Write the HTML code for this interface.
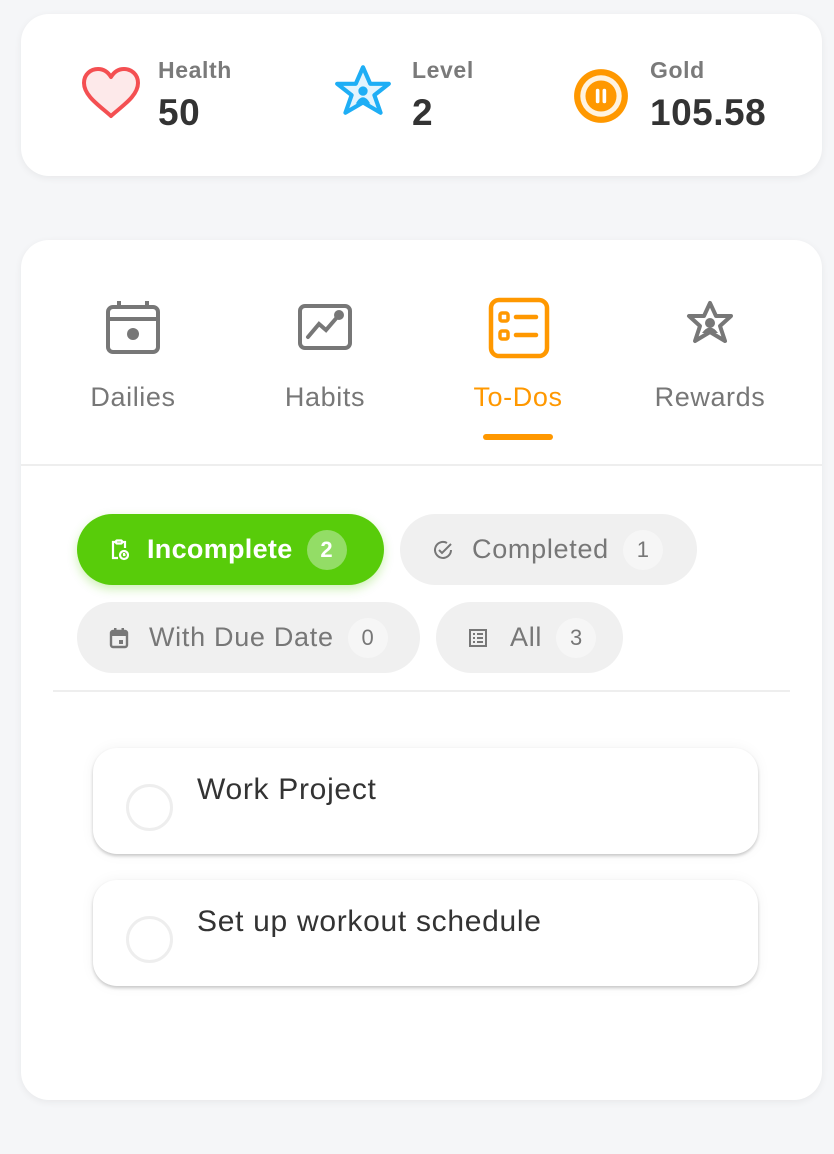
<!DOCTYPE html>
<html><head><style>
*{margin:0;padding:0;box-sizing:border-box}
body{width:834px;height:1154px;background:#f5f6f8;font-family:"Liberation Sans",sans-serif;position:relative;overflow:hidden}
.card{position:absolute;left:21px;width:801px;background:#fff;border-radius:28px;box-shadow:0 2px 8px rgba(0,0,0,.06)}
.a{position:absolute}
.lbl{font-size:23px;font-weight:bold;color:#7a7a7a;letter-spacing:.6px}
.val{font-size:37px;font-weight:bold;color:#333;letter-spacing:.5px}
.tab{position:absolute;width:190px;text-align:center;font-size:27px;color:#777;top:382px;letter-spacing:.6px}
.chip{position:absolute;height:71px;border-radius:36px;background:#f0f0f0;color:#777;font-size:27px;display:flex;align-items:center;padding-left:32px;letter-spacing:.7px}
.badge{display:inline-flex;width:40px;height:40px;border-radius:20px;background:#f6f6f6;align-items:center;justify-content:center;font-size:22px;margin-left:14px;letter-spacing:0}
.task{position:absolute;left:93px;width:665px;height:106px;background:#fff;border-radius:24px;box-shadow:0 2px 3px rgba(0,0,0,.2),0 0 14px rgba(0,0,0,.05)}
.circ{position:absolute;left:33px;top:36px;width:47px;height:47px;border-radius:50%;border:3px solid #eee}
.tt{position:absolute;left:104px;top:25px;font-size:30px;color:#333;letter-spacing:.7px}
</style></head><body>
<div class="card" style="top:14px;height:162px"></div>
<svg class="a" style="left:80px;top:66px" width="62" height="54" viewBox="0 0 62 54"><path d="M31 50 C20 40 4 30 4 17 C4 8 11 3 18 3 C24 3 28 6 31 11 C34 6 38 3 44 3 C51 3 58 8 58 17 C58 30 42 40 31 50Z" fill="#fde9ea" stroke="#f44f52" stroke-width="4" stroke-linejoin="round"/></svg>
<div class="a lbl" style="left:158px;top:57px">Health</div>
<div class="a val" style="left:158px;top:92px">50</div>
<svg class="a" style="left:333px;top:64px" width="60" height="52" viewBox="0 0 58 50"><path d="M29 3 L36 19 L54 19 L40 30 L46 47 L29 37 L12 47 L18 30 L4 19 L22 19Z" fill="#e3f4fd" stroke="#1eaef5" stroke-width="4" stroke-linejoin="round"/><circle cx="29" cy="26" r="4.5" fill="#1eaef5"/><path d="M22 38 Q29 26 36 38Z" fill="#1eaef5"/></svg>
<div class="a lbl" style="left:412px;top:57px">Level</div>
<div class="a val" style="left:412px;top:92px">2</div>
<svg class="a" style="left:572px;top:67px" width="58" height="58" viewBox="0 0 56 56"><circle cx="28" cy="28" r="26" fill="#ff9800"/><circle cx="28" cy="28" r="20" fill="#fff3e0"/><circle cx="28" cy="28" r="15" fill="#ff9800"/><rect x="23" y="21" width="3.5" height="14" rx="1.7" fill="#fff"/><rect x="29.5" y="21" width="3.5" height="14" rx="1.7" fill="#fff"/></svg>
<div class="a lbl" style="left:650px;top:57px">Gold</div>
<div class="a val" style="left:650px;top:92px">105.58</div>

<div class="card" style="top:240px;height:860px"></div>
<svg class="a" style="left:105px;top:299px" width="56" height="56" viewBox="0 0 56 56" fill="none" stroke="#777" stroke-width="4"><rect x="3" y="8" width="50" height="45" rx="5"/><line x1="3" y1="20" x2="53" y2="20"/><line x1="14" y1="2" x2="14" y2="10"/><line x1="42" y1="2" x2="42" y2="10"/><circle cx="28" cy="35" r="6" fill="#777" stroke="none"/></svg>
<svg class="a" style="left:297px;top:303px" width="56" height="48" viewBox="0 0 56 48" fill="none" stroke="#777" stroke-width="4"><rect x="3" y="3" width="50" height="42" rx="5"/><path d="M11 34 L22 21 L29 27 L42 12" stroke-linecap="round"/><circle cx="42" cy="12" r="3" fill="#777"/></svg>
<svg class="a" style="left:488px;top:297px" width="62" height="62" viewBox="0 0 62 62" fill="none" stroke="#ff9800" stroke-width="4.5"><rect x="3" y="3" width="56" height="56" rx="8"/><rect x="12" y="16" width="8" height="8" rx="2" stroke-width="3.5"/><rect x="12" y="34" width="8" height="8" rx="2" stroke-width="3.5"/><line x1="28" y1="20" x2="48" y2="20" stroke-linecap="round"/><line x1="28" y1="38" x2="48" y2="38" stroke-linecap="round"/></svg>
<svg class="a" style="left:685px;top:300px" width="50" height="44" viewBox="0 0 50 44"><path d="M25 3 L31 16 L46 16 L35 26 L40 41 L25 32 L10 41 L15 26 L4 16 L19 16Z" fill="none" stroke="#777" stroke-width="4" stroke-linejoin="round"/><circle cx="25" cy="23" r="5" fill="#777"/><path d="M17 33 Q25 22 33 33Z" fill="#777"/></svg>
<div class="tab" style="left:38px">Dailies</div>
<div class="tab" style="left:230px">Habits</div>
<div class="tab" style="left:423px;color:#ff9800">To-Dos</div>
<div class="tab" style="left:615px">Rewards</div>
<div class="a" style="left:483px;top:434px;width:70px;height:6px;border-radius:3px;background:#ff9800"></div>
<div class="a" style="left:21px;top:464px;width:801px;height:2px;background:#eee"></div>

<div class="chip" style="left:77px;top:514px;width:307px;background:#58cc0a;color:#fff;font-weight:bold;box-shadow:0 4px 10px rgba(88,204,10,.3);letter-spacing:.3px">
<svg width="20" height="22" viewBox="0 0 20 22" fill="none" stroke="#fff" stroke-width="2.2" style="margin-right:18px"><path d="M7 3H4v16h5"/><path d="M13 3h3v6"/><rect x="7" y="1.5" width="6" height="3" rx="1"/><circle cx="15" cy="16" r="4"/><path d="M15 14v2h1.5"/></svg>Incomplete<span class="badge" style="background:#93dd66;color:#fff">2</span></div>
<div class="chip" style="left:400px;top:514px;width:297px">
<svg width="22" height="22" viewBox="0 0 22 22" fill="none" stroke="#777" stroke-width="2" style="margin-right:18px"><path d="M19 11a8 8 0 1 1-4-7"/><path d="M7 11l3 3 9-9"/></svg>Completed<span class="badge">1</span></div>
<div class="chip" style="left:77px;top:602px;width:343px">
<svg width="20" height="22" viewBox="0 0 20 22" style="margin-right:20px"><rect x="2" y="4" width="16" height="16" rx="2" fill="none" stroke="#777" stroke-width="2.4"/><rect x="2" y="4" width="16" height="5" fill="#777"/><rect x="5" y="1" width="2.5" height="4" fill="#777"/><rect x="12.5" y="1" width="2.5" height="4" fill="#777"/><rect x="10" y="13" width="4" height="4" fill="#777"/></svg>With Due Date<span class="badge">0</span></div>
<div class="chip" style="left:436px;top:602px;width:187px">
<svg width="20" height="20" viewBox="0 0 20 20" fill="none" stroke="#777" stroke-width="2" style="margin-right:22px"><rect x="2" y="2" width="16" height="16"/><path d="M5 6h2M9 6h6M5 10h2M9 10h6M5 14h2M9 14h6"/></svg>All<span class="badge">3</span></div>
<div class="a" style="left:53px;top:690px;width:737px;height:2px;background:#eee"></div>

<div class="task" style="top:748px"><div class="circ"></div><div class="tt">Work Project</div></div>
<div class="task" style="top:880px"><div class="circ"></div><div class="tt">Set up workout schedule</div></div>
</body></html>
